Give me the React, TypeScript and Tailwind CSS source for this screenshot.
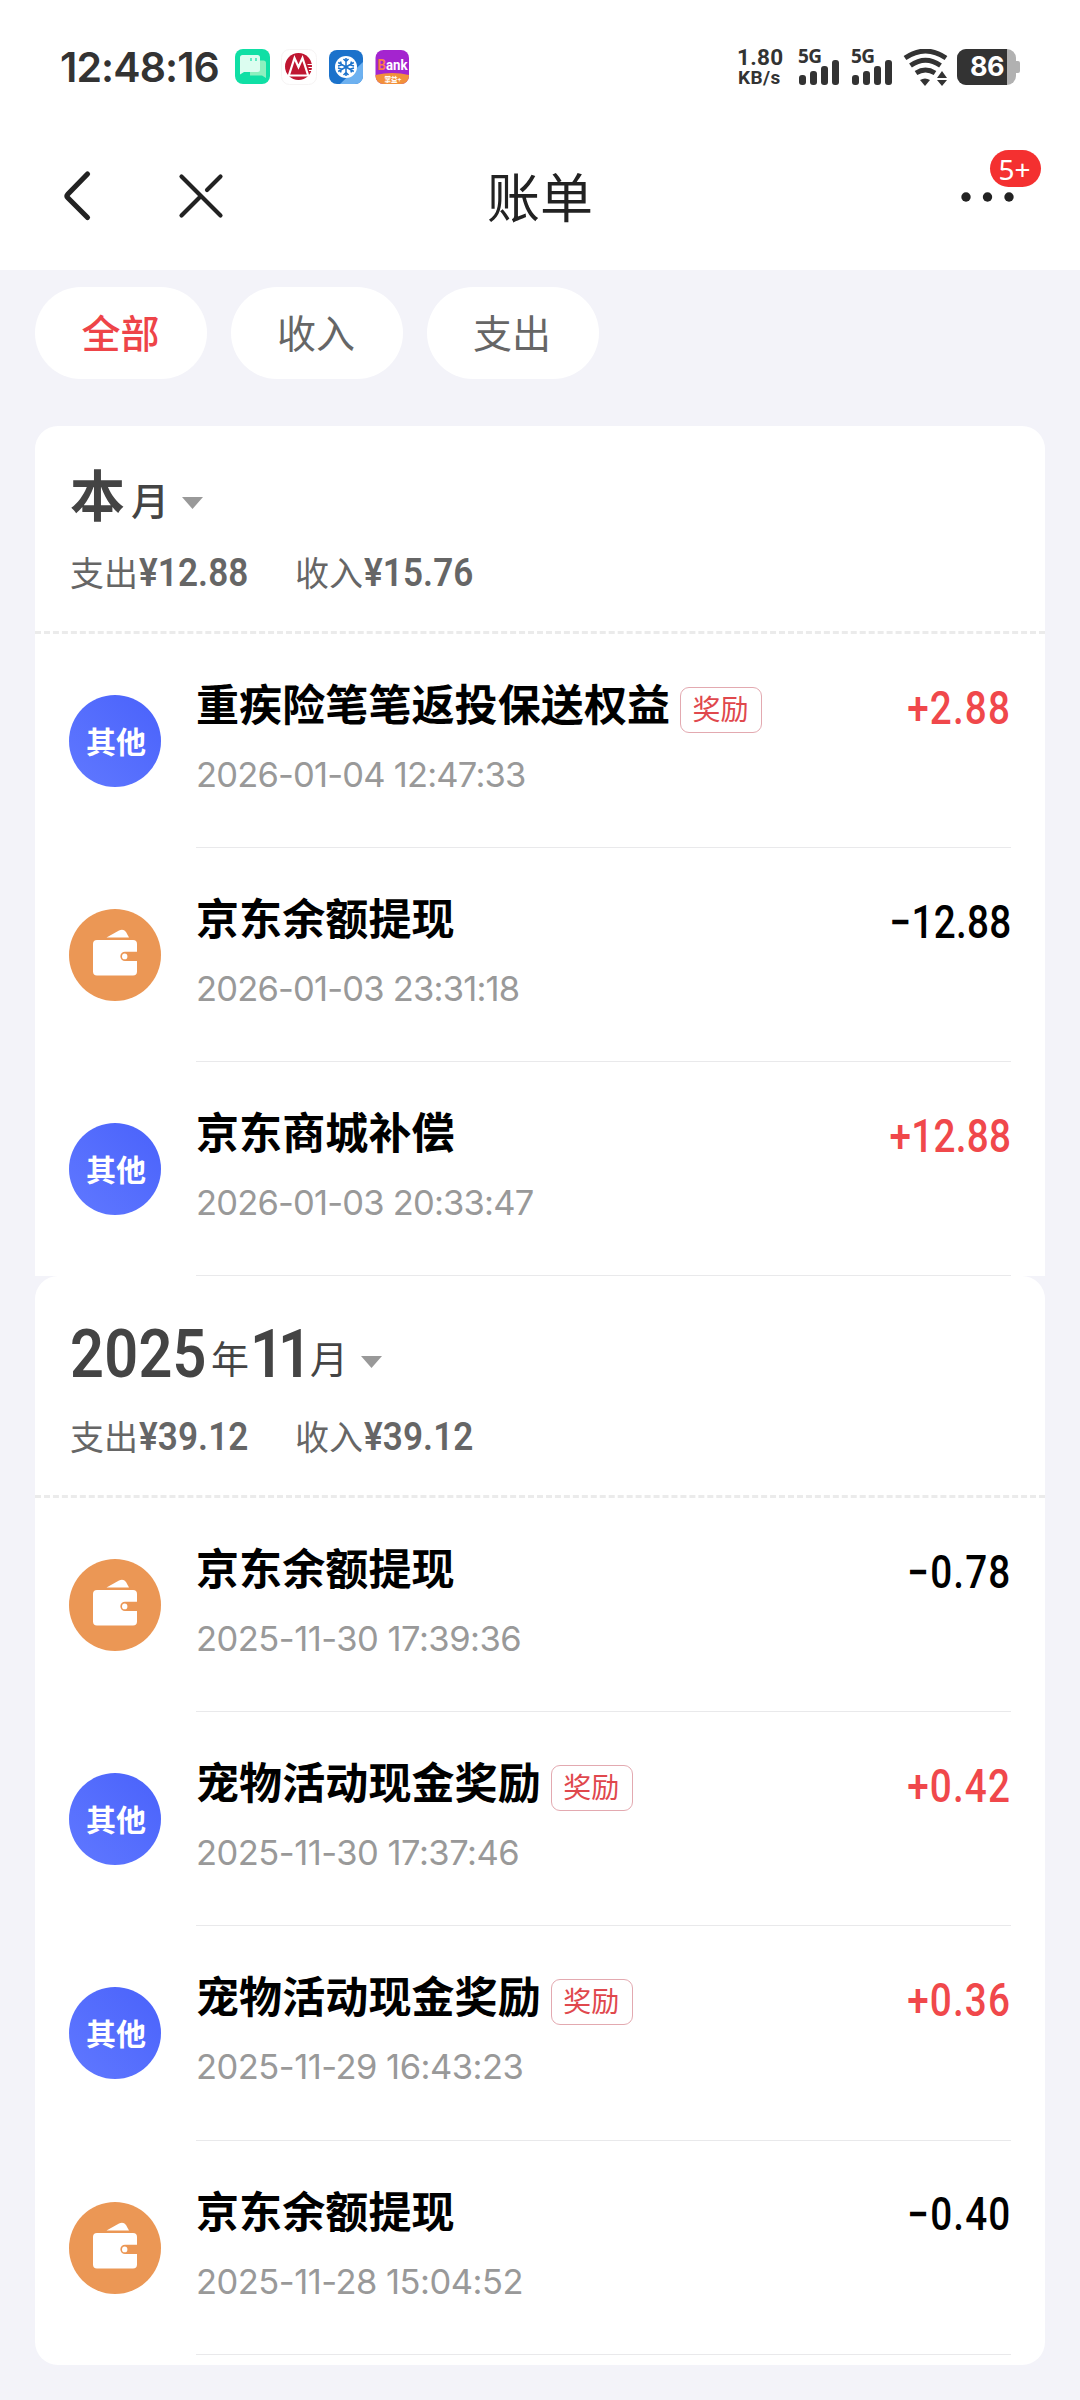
import { useState } from 'react';

type Bill = {
    title: string;
    time: string;
    amount: string;
    kind: 'other' | 'wallet';
    reward?: boolean;
};

const thisMonth: Bill[] = [
    { title: '重疾险笔笔返投保送权益', time: '2026-01-04 12:47:33', amount: '+2.88', kind: 'other', reward: true },
    { title: '京东余额提现', time: '2026-01-03 23:31:18', amount: '−12.88', kind: 'wallet' },
    { title: '京东商城补偿', time: '2026-01-03 20:33:47', amount: '+12.88', kind: 'other' },
];

const november: Bill[] = [
    { title: '京东余额提现', time: '2025-11-30 17:39:36', amount: '−0.78', kind: 'wallet' },
    { title: '宠物活动现金奖励', time: '2025-11-30 17:37:46', amount: '+0.42', kind: 'other', reward: true },
    { title: '宠物活动现金奖励', time: '2025-11-29 16:43:23', amount: '+0.36', kind: 'other', reward: true },
    { title: '京东余额提现', time: '2025-11-28 15:04:52', amount: '−0.40', kind: 'wallet' },
];

const tabs = ['全部', '收入', '支出'];

/** 状态栏应用图标 */
const AppIcons = () => {
    return (
        <svg width="180" height="40" viewBox="0 0 180 40">
            <rect x="1" y="2" width="35" height="35" rx="8" fill="#10dfa5" />
            <path d="M18.500 13.500h11a2.500 2.500 0 0 1 2.500 2.500v15l-4-2.500H16V16z" fill="#8df0bf" />
            <path d="M8.500 8h15a2.500 2.500 0 0 1 2.500 2.500v12a2.500 2.500 0 0 1-2.500 2.500H10l-4 2.500V10.500A2.500 2.500 0 0 1 8.500 8z" fill="#dcfdf0" />
            <path d="M17 11v3M22 11v3" stroke="#10dfa5" strokeWidth="1.200" />
            <rect x="47.500" y="2.500" width="35" height="35" rx="8" fill="#fff" stroke="#f6f4f4" />
            <circle cx="64.500" cy="19.500" r="13.500" fill="#bf1631" />
            <path d="M55 28l5.500-17L64.500 20l4-9L74 28" fill="none" stroke="#fff" strokeWidth="2.200" />
            <path d="M54 28.500h21" stroke="#fff" strokeWidth="2" />
            <path d="M73.500 17.500h5M74.500 20.500h4M75 23.500h3" stroke="#fff" strokeWidth="1.200" />
            <rect x="95" y="3" width="34" height="34" rx="8" fill="#1b72cb" />
            <path d="M129 15v14a8 8 0 0 1-8 8h-15z" fill="#6db1f0" />
            <circle cx="112" cy="20" r="11" fill="#fff" />
            <path
                d="M112 11v18M104.200 15.500l15.600 9M119.800 15.500l-15.600 9M109.500 12l2.500 2.500 2.500-2.500M109.500 28l2.500-2.500 2.500 2.500M104 19l3.500-1-1-3.500M120 21l-3.500 1 1 3.500M104 21l3.500 1-1 3.500M120 19l-3.500-1 1-3.500"
                fill="none"
                stroke="#1b72cb"
                strokeWidth="1.500"
            />
            <rect x="141.500" y="3" width="33.500" height="34" rx="8" fill="#a424cf" />
            <path d="M141.500 28q17-4 33.500 0v1a8 8 0 0 1-8 8h-17.500a8 8 0 0 1-8-8z" fill="#f2903a" />
            <text x="143.500" y="23" fontSize="14" fontWeight="700" fill="#fff" textLength="30" lengthAdjust="spacingAndGlyphs" fontFamily="Roboto, sans-serif">
                <tspan fill="#fb7b4b">B</tspan>ank
            </text>
            <text x="150.500" y="34.500" fontSize="6.500" fontWeight="700" fill="#fff" fontFamily="'Noto Sans CJK SC', sans-serif">掌益+</text>
        </svg>
    );
};

/** 信号图标 */
const Signal = () => {
    return (
        <div className="flex w-[42px] flex-col">
            <span className="h-[14px] font-['Noto_Sans'] text-[19px] leading-[14px] font-bold tracking-[-0.5px]">5G</span>
            <div className="-mt-[3px] flex h-[25px] items-end gap-[4px] pl-[1px]">
                <div className="h-[10px] w-[7px] rounded-[3px] bg-[#333]" />
                <div className="h-[14px] w-[7px] rounded-[3px] bg-[#333]" />
                <div className="h-[19px] w-[7px] rounded-[3px] bg-[#333]" />
                <div className="h-[25px] w-[7px] rounded-[3px] bg-[#333]" />
            </div>
        </div>
    );
};

const StatusBar = () => {
    return (
        <div className="flex h-[134px] items-center justify-between pr-[60px] pl-[60px] text-[#333]">
            <div className="flex items-center">
                <span className="w-[174px] font-['Inter'] text-[41px] leading-[40px] font-semibold tracking-[-0.9px]">12:48:16</span>
                <AppIcons />
            </div>
            <div className="flex h-[37px] items-start">
                <div className="flex w-[61px] flex-col font-['Roboto'] font-bold">
                    <span className="text-[22.500px] leading-[17px] tracking-[0.300px]">1.80</span>
                    <span className="pl-[1px] text-[19px] leading-[23px] tracking-[0.400px]">KB/s</span>
                </div>
                <Signal />
                <div className="w-[11px]" />
                <Signal />
                <svg className="ml-[10px]" width="46" height="37" viewBox="0 0 46 37" fill="none">
                    <path d="M2 9Q22.500-5 43 9M7.500 16.500Q22.500 6 37.500 16.500M13 24Q22.500 18 32 24" stroke="#333" strokeWidth="4.800" />
                    <path d="M17 31q5-3 10 0l-5 6z" fill="#333" />
                    <path d="M34 29l5-7 5 7zM34 31h10l-5 6z" fill="#333" />
                </svg>
                <div className="ml-[8px] flex items-center">
                    <div className="flex h-[36px] w-[59px] overflow-hidden rounded-[9px] bg-[#b1b1b1]">
                        <div className="w-[50px] bg-[#333] pl-[13px] font-['Inter'] text-[27px] leading-[36px] font-bold tracking-[-0.500px] text-white">86</div>
                    </div>
                    <div className="h-[12px] w-[4px] rounded-r-[2px] bg-[#b1b1b1]" />
                </div>
            </div>
        </div>
    );
};

const NavBar = () => {
    return (
        <div className="relative flex h-[136px] items-center justify-center">
            <svg className="absolute top-[30px] left-[50px]" width="190" height="70" viewBox="0 0 190 70" fill="none" stroke="#222" strokeLinecap="round" strokeLinejoin="round">
                <path d="M37.500 10L18 30q-2 2 0 4L37.500 53.500" strokeWidth="5.200" />
                <path d="M131.500 12.500L170.500 51.500M131.500 51.500L150.500 32.500M170.500 12.500L157 26" strokeWidth="4.200" />
            </svg>
            <h1 className="-mt-[14px] text-[53px] leading-[60px] text-[#222]">账单</h1>
            <svg className="absolute top-[55px] left-[956px]" width="60" height="16" fill="#222">
                <circle cx="10" cy="8" r="4.700" />
                <circle cx="31.500" cy="8" r="4.700" />
                <circle cx="53" cy="8" r="4.700" />
            </svg>
            <span className="absolute top-[16px] left-[990px] flex h-[37px] w-[51px] items-center justify-center rounded-full bg-[#f43030] pr-[2px] font-['Noto_Sans'] text-[28px] leading-none text-white">5+</span>
        </div>
    );
};

/** 账单类型图标 */
const KindIcon = ({ kind }: { kind: Bill['kind'] }) => {
    if (kind === 'other') {
        return (
            <div className="flex size-[92px] items-center justify-center rounded-full bg-linear-to-tr from-[#6078ff] to-[#4a62fb] pb-[1px] pl-[2px] text-[30px] font-bold text-white">
                其他
            </div>
        );
    }
    return (
        <svg width="92" height="92" viewBox="0 0 92 92">
            <circle cx="46" cy="46" r="46" fill="#eb9755" />
            <path d="M37.500 28.500L50 21.500Q54.500 19.500 57 23L60 28.500z" fill="#fff" />
            <path d="M28 31H64a4 4 0 0 1 4 4V42.700H56a4.650 4.650 0 0 0 0 9.300H68V62.500a4 4 0 0 1-4 4H28a4 4 0 0 1-4-4V35a4 4 0 0 1 4-4z" fill="#fff" />
            <ellipse cx="55.700" cy="47.400" rx="2.700" ry="2.900" fill="#fff" />
        </svg>
    );
};

const BillRow = ({ bill }: { bill: Bill }) => {
    const income = bill.amount.startsWith('+');
    return (
        <li className="flex h-[214.100px] pl-[34px]">
            <div className="mt-[61px] h-[92px] w-[92px]">
                <KindIcon kind={bill.kind} />
            </div>
            <div className="mr-[34px] ml-[35px] flex flex-1 flex-col border-b border-[#e9e9eb]">
                <div className="mt-[38px] flex h-[60px] items-center">
                    <p className="text-[43px] leading-[60px] font-bold tracking-[0.100px] text-black">{bill.title}</p>
                    {bill.reward && (
                        <span className="mt-[16px] ml-[10px] flex h-[46px] w-[82px] justify-center rounded-[9px] border border-[#e3a9b0] pr-[1px] text-[28px] leading-[40px] text-[#e0484d]">
                            奖励
                        </span>
                    )}
                    <p
                        className={`mt-[13px] ml-auto origin-right scale-x-85 font-['Roboto'] text-[45.500px] leading-[60px] font-medium ${
                            bill.amount.length > 5 ? 'tracking-[0.300px]' : 'tracking-[1.300px]'
                        } ${income ? 'text-[#f0484b]' : 'text-black'}`}
                    >
                        {bill.amount}
                    </p>
                </div>
                <p
                    className={`mt-[23px] font-['Inter'] text-[34.500px] leading-[40px] text-[#999] ${
                        bill.time.includes('-11-') ? 'tracking-[-0.500px]' : 'tracking-[-0.800px]'
                    }`}
                >
                    {bill.time}
                </p>
            </div>
        </li>
    );
};

const Caret = () => {
    return (
        <svg className="mb-[20px] ml-[13px]" width="21" height="12" viewBox="0 0 21 12">
            <path d="M0 0h21L10.500 12z" fill="#999" />
        </svg>
    );
};

const Summary = ({ out, income }: { out: string; income: string }) => {
    const money = "ml-[1px] inline-block origin-left scale-x-90 font-['Roboto'] text-[39px] font-semibold tracking-[0.100px]";
    return (
        <div className="flex gap-[48px] text-[34px] leading-[44px] text-[#666]">
            <p className="w-[177px] whitespace-nowrap">
                支出<span className={money}>¥{out}</span>
            </p>
            <p className="whitespace-nowrap">
                收入<span className={money}>¥{income}</span>
            </p>
        </div>
    );
};

export default function App() {
    const [tab, setTab] = useState<string>('全部');

    return (
        <div className="min-h-[2400px] w-[1080px] bg-[#f3f3f9] font-['Noto_Sans_CJK_SC',sans-serif]">
            <header className="h-[270px] bg-white">
                <StatusBar />
                <NavBar />
            </header>
            <div className="flex gap-[24px] pt-[17px] pl-[35px]">
                {tabs.map((name) => (
                    <button
                        key={name}
                        onClick={() => setTab(name)}
                        className={
                            tab === name
                                ? 'h-[92px] w-[172px] rounded-full bg-white pr-[1px] pb-[4px] text-[39px] font-medium text-[#ee4448]'
                                : 'h-[92px] w-[172px] rounded-full bg-white pr-[2px] pb-[4px] text-[39px] text-[#666]'
                        }
                    >
                        {name}
                    </button>
                ))}
            </div>
            <main className="mx-[35px] mt-[47px]">
                <section className="h-[850.300px] rounded-t-[23px] bg-white">
                    <div className="h-[208px] border-b-[3px] border-dashed border-[#ebebeb] pl-[35px]">
                        <div className="flex h-[103px] items-end text-[#444]">
                            <span className="text-[55px] leading-[73px] font-bold">本</span>
                            <span className="ml-[6px] text-[38px] leading-[60px] font-medium">月</span>
                            <Caret />
                        </div>
                        <div className="mt-[21px]">
                            <Summary out="12.88" income="15.76" />
                        </div>
                    </div>
                    <ul>
                        {thisMonth.map((bill) => (
                            <BillRow key={bill.time} bill={bill} />
                        ))}
                    </ul>
                </section>
                <section className="h-[1089px] rounded-[23px] bg-white">
                    <div className="h-[222px] border-b-[3px] border-dashed border-[#ebebeb] pl-[35px]">
                        <div className="flex h-[112px] items-end text-[#444]">
                            <span className="w-[134px] origin-left scale-x-90 font-['Roboto'] text-[66px] leading-[66px] font-semibold tracking-[0.300px]">2025</span>
                            <span className="ml-[7px] text-[38px] leading-[62px]">年</span>
                            <span className="ml-[1px] w-[55px] origin-left scale-x-90 font-['Roboto'] text-[66px] leading-[66px] font-semibold tracking-[-6.500px]">11</span>
                            <span className="ml-[5px] text-[38px] leading-[62px]">月</span>
                            <Caret />
                        </div>
                        <div className="mt-[26px]">
                            <Summary out="39.12" income="39.12" />
                        </div>
                    </div>
                    <ul>
                        {november.map((bill) => (
                            <BillRow key={bill.time} bill={bill} />
                        ))}
                    </ul>
                </section>
            </main>
        </div>
    );
}
